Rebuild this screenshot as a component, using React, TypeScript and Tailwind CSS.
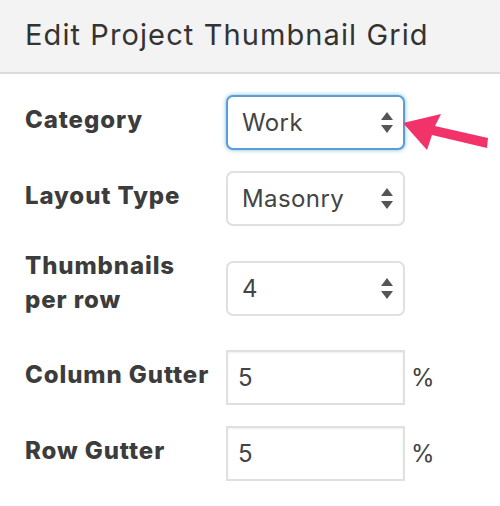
import React from "react";

const Arrows = () => (
  <svg width="12" height="22" viewBox="0 0 12 22" className="shrink-0">
    <polygon points="6,0 12,8 0,8" fill="#555" />
    <polygon points="0,13 12,13 6,21" fill="#555" />
  </svg>
);

const Select = ({ value, focused }: { value: string; focused?: boolean }) => (
  <div
    className={
      "w-[179px] h-[55px] rounded-[7px] bg-white flex items-center justify-between pl-[14px] pr-[10px] text-[24px] tracking-[0.4px] text-[#444] " +
      (focused
        ? "border-2 border-[#5b9dd9] shadow-[0_0_4px_rgba(30,140,190,0.6)]"
        : "border-2 border-[#e0e0e0]")
    }
  >
    <span>{value}</span>
    <Arrows />
  </div>
);

const Input = ({ value }: { value: string }) => (
  <div className="flex items-center">
    <div className="w-[179px] h-[55px] bg-white border-2 border-[#e0e0e0] shadow-[inset_0_1px_2px_rgba(0,0,0,0.07)] flex items-center pl-[10px] text-[24px] text-[#444]">
      {value}
    </div>
    <span className="ml-[6px] text-[24px] text-[#444]">%</span>
  </div>
);

const Label = ({ children, className = "" }: { children: React.ReactNode; className?: string }) => (
  <div className={"w-[201px] shrink-0 font-extrabold text-[24px] tracking-[0.9px] leading-[34px] text-[#3c3c3c] " + className}>{children}</div>
);

export default function App() {
  return (
    <div className="w-[500px] h-[506px] bg-white relative overflow-hidden" style={{ fontFamily: "Inter, 'Liberation Sans', sans-serif" }}>
      <div className="h-[74px] bg-[#f3f3f3] border-b-2 border-[#dcdcdc] pl-[25px] flex items-center">
        <h1 className="text-[29px] tracking-[1.1px] text-[#333] leading-none -mt-[4px]">Edit Project Thumbnail Grid</h1>
      </div>
      <div className="pl-[25px] pt-[21px]">
        <div className="flex items-start">
          <Label className="pt-[8px]">Category</Label>
          <Select value="Work" focused />
        </div>
        <div className="flex items-start mt-[21px]">
          <Label className="pt-[8px]">Layout Type</Label>
          <Select value="Masonry" />
        </div>
        <div className="flex items-start mt-[23px]">
          <Label>
            Thumbnails
            <br />
            per row
          </Label>
          <div className="mt-[12px]">
            <Select value="4" />
          </div>
        </div>
        <div className="flex items-start mt-[33px]">
          <Label className="pt-[8px]">Column Gutter</Label>
          <Input value="5" />
        </div>
        <div className="flex items-start mt-[21px]">
          <Label className="pt-[8px]">Row Gutter</Label>
          <Input value="5" />
        </div>
      </div>
      <svg className="absolute left-0 top-0 pointer-events-none" width="500" height="506" viewBox="0 0 500 506">
        <polygon
          points="403,123 441,114 435,126 488,138 487,148 432,135 427,150"
          fill="#f2336a"
        />
      </svg>
    </div>
  );
}
